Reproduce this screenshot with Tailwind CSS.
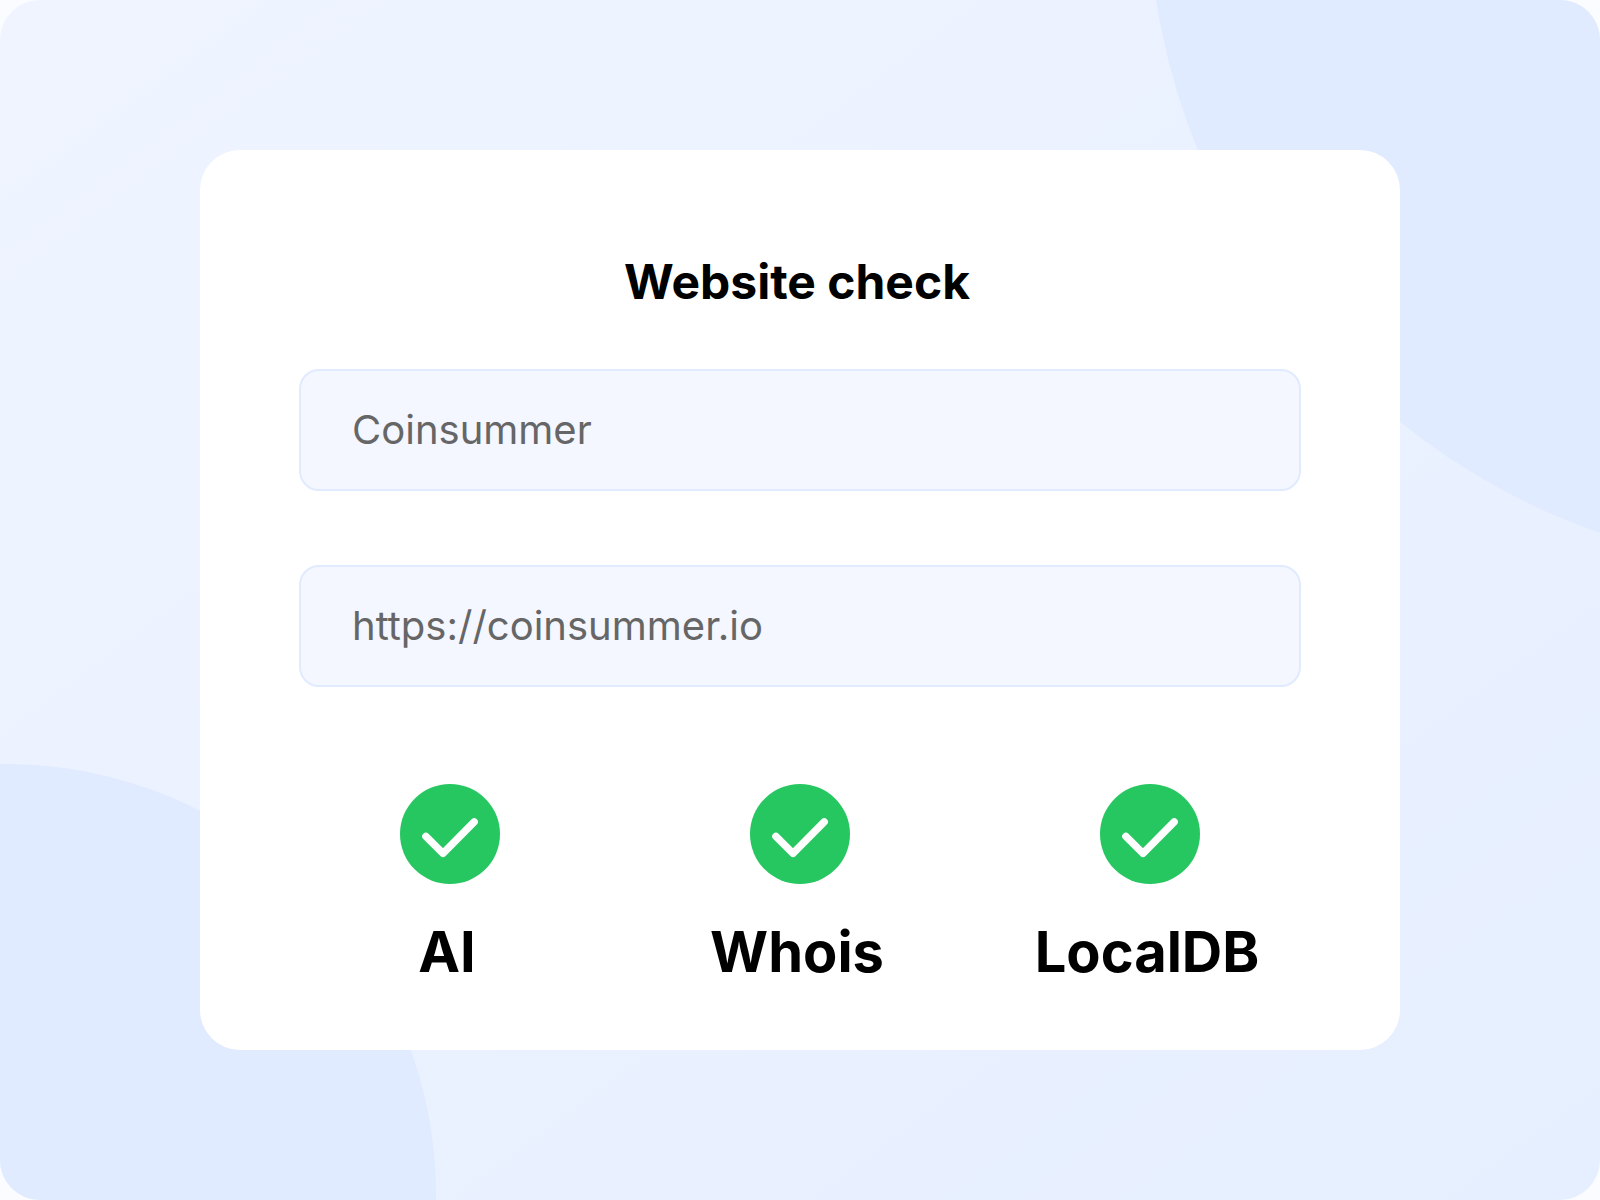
<!DOCTYPE html>
<html lang="en">
<head>
  <meta charset="UTF-8" />
  <meta name="viewport" content="width=device-width, initial-scale=1.0" />
  <title>Website check</title>
  <script src="https://cdn.jsdelivr.net/npm/@tailwindcss/browser@4"></script>
</head>
<body class="bg-[#fbfcff] font-['Inter',sans-serif]">
  <main class="relative flex min-h-screen items-center justify-center overflow-hidden rounded-[40px] bg-linear-to-br/srgb from-[#eff4ff] to-[#e6efff]">
    <!-- Background circles -->
    <svg class="absolute inset-0 h-full w-full" viewBox="0 0 1600 1200" preserveAspectRatio="xMidYMid slice" fill="#e0ebff" aria-hidden="true">
      <circle cx="1823" cy="-104" r="675" />
      <circle cx="5" cy="1195" r="431" />
    </svg>

    <form class="relative w-3/4 rounded-[40px] bg-white px-[99px] pt-[100px] pb-[70px]">
      <h1 class="pr-1.5 text-center text-[48px] leading-[64px] font-bold text-black">Website check</h1>

      <div class="mt-[55px] flex flex-col gap-[74px]">
        <input type="text" name="name" aria-label="Name" value="Coinsummer" class="h-[122px] w-full rounded-[20px] border-2 border-[#e0ebff] bg-[#f4f7ff] px-[51px] pb-0.5 text-[40px] text-[#666666]" />
        <input type="text" name="url" aria-label="Website URL" value="https://coinsummer.io" class="h-[122px] w-full rounded-[20px] border-2 border-[#e0ebff] bg-[#f4f7ff] px-[51px] pb-0.5 text-[40px] text-[#666666]" />
      </div>

      <!-- Check results -->
      <ul class="mt-[97px] grid grid-cols-3 gap-12">
        <li class="flex flex-col items-center gap-10">
          <svg class="size-[100px]" viewBox="0 0 100 100" fill="none" aria-hidden="true">
            <circle cx="50" cy="50" r="50" fill="#26c760" />
            <path d="M25.9 52.3L43 69.3L74.2 37.8" stroke="#fff" stroke-width="7.4" stroke-linecap="round" stroke-linejoin="round" />
          </svg>
          <span class="pr-1.5 text-[56px] leading-[56px] font-bold text-black">AI</span>
        </li>
        <li class="flex flex-col items-center gap-10">
          <svg class="size-[100px]" viewBox="0 0 100 100" fill="none" aria-hidden="true">
            <circle cx="50" cy="50" r="50" fill="#26c760" />
            <path d="M25.9 52.3L43 69.3L74.2 37.8" stroke="#fff" stroke-width="7.4" stroke-linecap="round" stroke-linejoin="round" />
          </svg>
          <span class="pr-1.5 text-[56px] leading-[56px] font-bold text-black">Whois</span>
        </li>
        <li class="flex flex-col items-center gap-10">
          <svg class="size-[100px]" viewBox="0 0 100 100" fill="none" aria-hidden="true">
            <circle cx="50" cy="50" r="50" fill="#26c760" />
            <path d="M25.9 52.3L43 69.3L74.2 37.8" stroke="#fff" stroke-width="7.4" stroke-linecap="round" stroke-linejoin="round" />
          </svg>
          <span class="pr-1.5 text-[56px] leading-[56px] font-bold text-black">LocalDB</span>
        </li>
      </ul>
    </form>
  </main>
</body>
</html>
